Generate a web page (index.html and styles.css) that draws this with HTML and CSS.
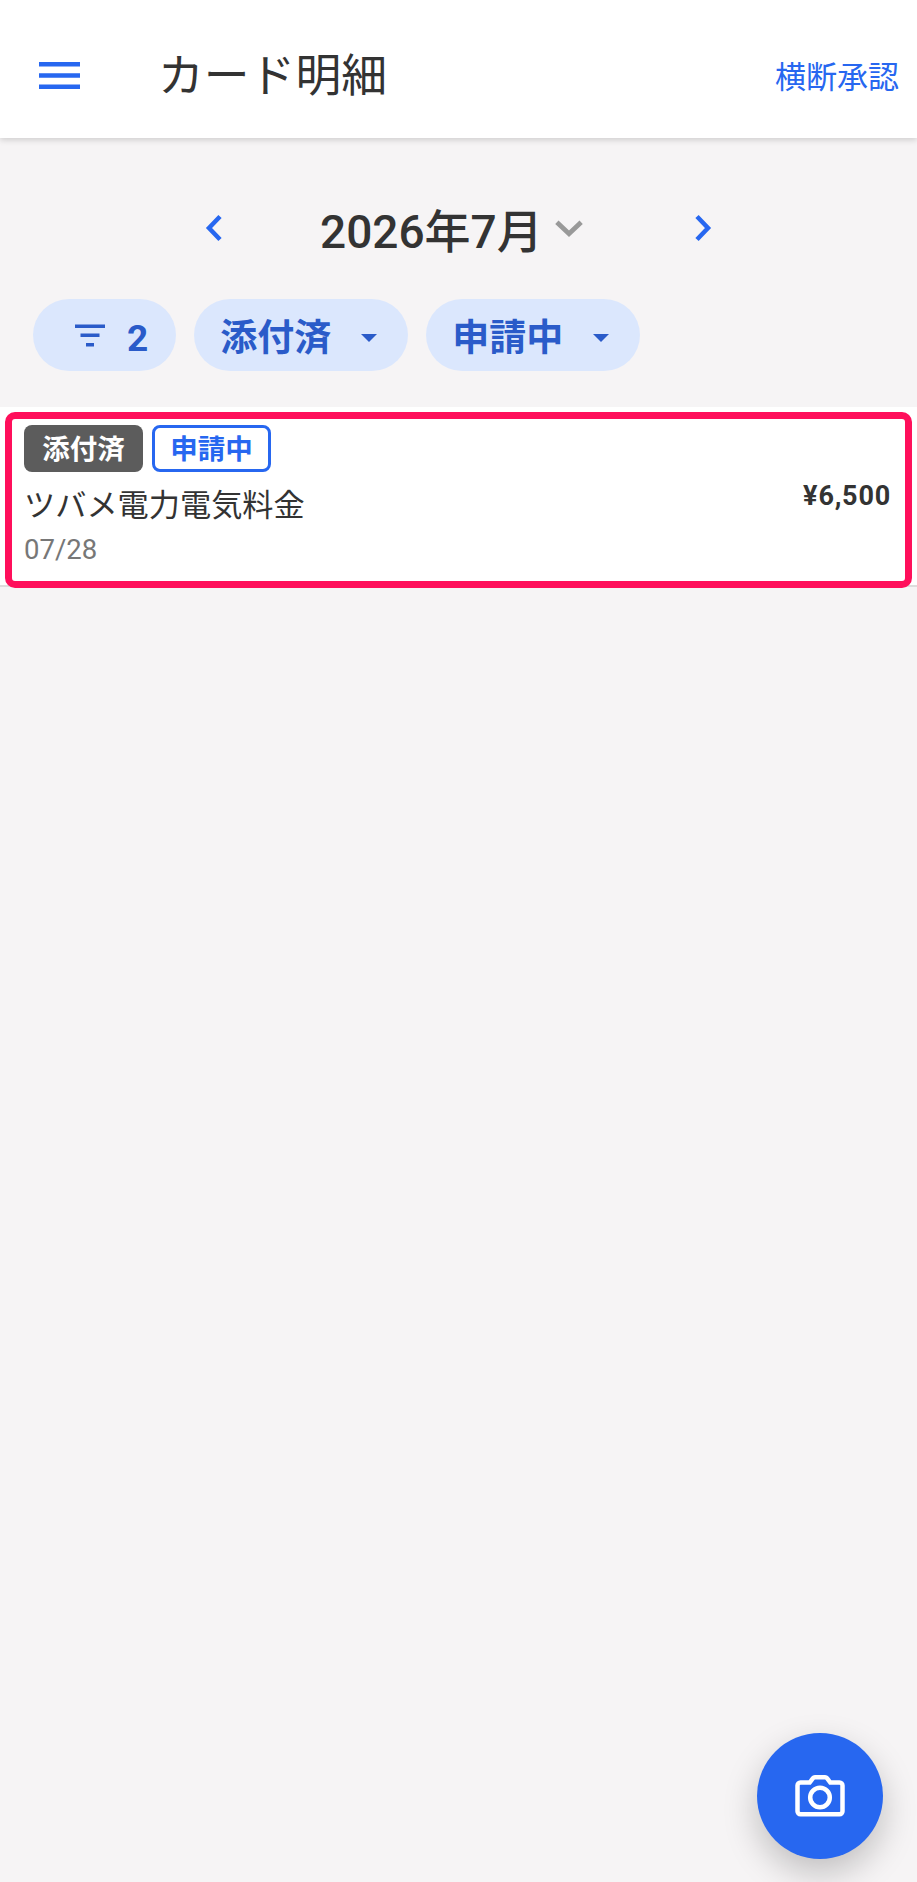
FILE: index.html
```html
<!DOCTYPE html>
<html lang="ja">
<head>
    <meta charset="UTF-8">
    <meta name="viewport" content="width=device-width, initial-scale=1.0">
    <title>カード明細</title>
    <link rel="stylesheet" href="styles.css">
</head>
<body>
    <div class="app">
        <!-- Header -->
        <header class="app-bar">
            <svg class="menu-icon" viewBox="0 0 41 27" aria-hidden="true">
                <path d="M0 0h41v4.500H0zM0 11.200h41v4.500H0zM0 22.500h41V27H0z"/>
            </svg>
            <h1 class="app-title">カード明細</h1>
            <a class="app-action">横断承認</a>
        </header>

        <!-- Month picker -->
        <div class="month-row">
            <svg class="month-arrow" viewBox="0 0 20 30" aria-hidden="true">
                <path d="M17 3.500 6 15l11 11.500"/>
            </svg>
            <div class="month-label">
                <span>2026年7月</span>
                <svg class="month-caret" viewBox="0 0 28 18" aria-hidden="true">
                    <path d="M2.500 3 14 14 25.500 3"/>
                </svg>
            </div>
            <svg class="month-arrow" viewBox="0 0 20 30" aria-hidden="true">
                <path d="M3 3.500 14 15 3 26.500"/>
            </svg>
        </div>

        <!-- Filters -->
        <div class="chips">
            <div class="chip chip-count">
                <svg class="filter-icon" viewBox="0 0 32 24" aria-hidden="true">
                    <path d="M1 1.500h30v3.500H1zM6.500 10.500h19V14h-19zM12 20h8v3.500h-8z"/>
                </svg>
                <span>2</span>
            </div>
            <div class="chip">
                <span>添付済</span>
                <i class="chip-caret"></i>
            </div>
            <div class="chip">
                <span>申請中</span>
                <i class="chip-caret"></i>
            </div>
        </div>

        <!-- Statements -->
        <div class="statement">
            <div class="statement-main">
                <div class="tags">
                    <span class="tag tag-attached">添付済</span>
                    <span class="tag tag-applying">申請中</span>
                </div>
                <div class="statement-name">ツバメ電力電気料金</div>
                <div class="statement-date">07/28</div>
            </div>
            <div class="statement-amount">¥6,500</div>
            <div class="statement-highlight"></div>
        </div>

        <button class="fab" aria-label="撮影">
            <svg class="camera-icon" viewBox="0 0 50 42" aria-hidden="true">
                <path d="M5.500 7.500h9.200l3.300-4.300c.5-.6 1.100-.9 1.900-.9h10.200c.8 0 1.400.3 1.900.9l3.300 4.300h9.200c1.700 0 3 1.300 3 3v25.700c0 1.700-1.300 3-3 3H5.500c-1.700 0-3-1.300-3-3V10.500c0-1.700 1.300-3 3-3z"/>
                <circle cx="25" cy="22.500" r="9.800"/>
            </svg>
        </button>
    </div>
</body>
</html>
```

FILE: styles.css
```css
* { box-sizing: border-box; }

html, body { margin: 0; padding: 0; }

body {
    font-family: Roboto, "Noto Sans CJK JP", sans-serif;
    background-color: #f6f4f5;
    color: #333;
}

.app {
    position: relative;
    height: 1882px;
    overflow: hidden;
}

.app-bar {
    display: flex;
    align-items: center;
    height: 138px;
    padding: 13px 18px 0 39px;
    background-color: #fff;
    box-shadow: 0 2px 6px rgba(0,0,0,0.16);
}
.menu-icon { width: 41px; height: 27px; fill: #2767f0; flex: none; }
.app-title {
    margin: 3px 0 0 78px;
    flex: 1;
    font-size: 45.800px;
    font-weight: 400;
    line-height: 1;
    letter-spacing: 0;
}
.app-action {
    margin-top: -3px;
    font-size: 31px;
    color: #2767f0;
}

.month-row {
    display: flex;
    justify-content: center;
    align-items: center;
    height: 70px;
    margin-top: 55px;
    padding: 0 203px;
}
.month-arrow {
    width: 20px;
    height: 30px;
    fill: none;
    stroke: #2767f0;
    stroke-width: 4.500;
}
.month-label {
    display: flex;
    align-items: center;
    gap: 11px;
    width: 315px;
    margin: 0 auto;
    padding-left: 19px;
    font-size: 46px;
    font-weight: 500;
    line-height: 1;
    white-space: nowrap;
}
.month-label span { margin-top: 7px; }
.month-caret {
    width: 30px;
    height: 19px;
    fill: none;
    stroke: #999;
    stroke-width: 4.500;
    flex: none;
}

.chips {
    display: flex;
    gap: 18px;
    margin-top: 36px;
    padding-left: 33px;
}
.chip {
    display: flex;
    align-items: center;
    height: 72px;
    padding: 6px 31px 0 26px;
    gap: 30px;
    border-radius: 36px;
    background-color: #dbe7fd;
    color: #2a5bc9;
    font-size: 37px;
    font-weight: 700;
    line-height: 1;
}
.chip-count { padding: 6px 28px 0 41px; gap: 21px; }
.filter-icon { width: 32px; height: 24px; margin-bottom: 6px; fill: #2a5bc9; flex: none; }
.chip-caret {
    width: 0;
    height: 0;
    border-left: 8px solid transparent;
    border-right: 8px solid transparent;
    border-top: 8px solid #2a5bc9;
}

.statement {
    position: relative;
    display: flex;
    justify-content: space-between;
    align-items: center;
    height: 180px;
    margin-top: 36px;
    padding: 18px 26px 0 24px;
    background-color: #fff;
    border-bottom: 2px solid #ddd;
}
.statement-main { align-self: flex-start; }
.statement-highlight {
    position: absolute;
    left: 5px;
    right: 5px;
    top: 5px;
    height: 176px;
    border: 7px solid #ff0f5b;
    border-radius: 10px;
}
.tags { display: flex; gap: 9px; }
.tag {
    display: flex;
    align-items: center;
    justify-content: center;
    width: 119px;
    height: 47px;
    padding-top: 3px;
    border-radius: 8px;
    font-size: 27.500px;
    font-weight: 700;
    line-height: 1;
}
.tag-attached { background-color: #5c5c5c; color: #fff; }
.tag-applying { border: 3px solid #2767f0; color: #2767f0; background-color: #fff; }
.statement-name {
    margin-top: 14px;
    font-size: 31.200px;
    line-height: 40px;
}
.statement-date {
    margin-top: 8px;
    font-size: 27.500px;
    line-height: 32px;
    color: #777;
}
.statement-amount {
    margin-top: -18px;
    font-size: 27px;
    font-weight: 700;
    letter-spacing: 0.800px;
}

.fab {
    position: absolute;
    left: 757px;
    top: 1733px;
    display: flex;
    align-items: center;
    justify-content: center;
    width: 126px;
    height: 126px;
    padding: 0;
    border: none;
    border-radius: 50%;
    background-color: #2767f0;
    box-shadow: 0 14px 34px rgba(0,0,0,0.22);
}
.camera-icon {
    width: 50px;
    height: 42px;
    fill: none;
    stroke: #fff;
    stroke-width: 4.500;
}
```
